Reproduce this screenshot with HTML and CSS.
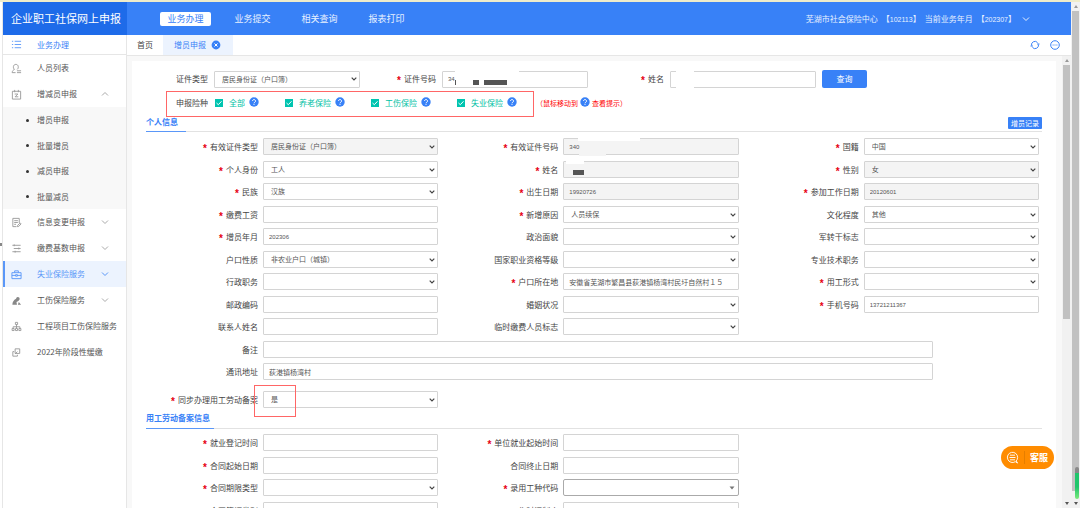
FILE: index.html
```html
<!DOCTYPE html>
<html lang="zh-CN">
<head>
<meta charset="utf-8">
<title>企业职工社保网上申报</title>
<link rel="stylesheet" href="styles.css">
</head>
<body>
<svg class="defs" aria-hidden="true">
  <symbol id="chev" viewBox="0 0 8 8"><path d="M1 2.5 4 5.5 7 2.5"/></symbol>
  <symbol id="help" viewBox="0 0 10 10"><circle cx="5" cy="5" r="4.7" fill="#3881f7" stroke="none"/><path d="M3.5 4a1.5 1.5 0 1 1 2.3 1.3C5.2 5.6 5 5.8 5 6.3M5 7.1v.9" stroke="#fff"/></symbol>
</svg>
<div class="frame">
  <div class="app">
    <header class="header">
      <h1 class="brand">企业职工社保网上申报</h1>
      <nav class="nav">
        <a href="#" class="nav-link current">业务办理</a>
        <a href="#" class="nav-link">业务提交</a>
        <a href="#" class="nav-link">相关查询</a>
        <a href="#" class="nav-link">报表打印</a>
      </nav>
      <div class="account">
        <span>芜湖市社会保险中心</span>
        <span>【<small>102113</small>】</span>
        <span>当前业务年月</span>
        <span>【<small>202307</small>】</span>
        <svg class="icon-s"><use href="#chev"/></svg>
      </div>
    </header>
    <div class="body">
      <aside class="sidebar">
        <a href="#" class="side-item side-title">
          <svg class="icon" viewBox="0 0 12 12"><path d="M4 2.500h7M4 6h7M4 9.500h7M1 2.500h1.400M1 6h1.400M1 9.500h1.400"/></svg><span>业务办理</span></a>
        <a href="#" class="side-item">
          <svg class="icon" viewBox="0 0 12 12"><path d="M3.800 7C1.800 5.500 2.300 1.500 5.300 1.500S8.700 5.500 6.800 7M3.800 7C2.500 7.500 1.500 8.500 1.200 10.500H5M6.500 8.500h4.500M6.500 10.500h4.500"/></svg><span>人员列表</span></a>
        <a href="#" class="side-item">
          <svg class="icon" viewBox="0 0 12 12"><path d="M1.500 2.500h9v8.500h-9zM4 1v2.500M8 1v2.500M4 5.500h3.500L4.500 8.500h3.500"/></svg><span>增减员申报</span><svg class="icon-s up"><use href="#chev"/></svg></a>
        <ul class="sub">
          <li><a href="#">增员申报</a></li>
          <li><a href="#">批量增员</a></li>
          <li><a href="#">减员申报</a></li>
          <li><a href="#">批量减员</a></li>
        </ul>
        <a href="#" class="side-item">
          <svg class="icon" viewBox="0 0 12 12"><path d="M6 10.500H2v-9h7v5M3.500 4h4M3.500 6h4M3.500 8h2M7 10.500l.3-1.500L10 6.500l1 1-2.500 2.700z"/></svg><span>信息变更申报</span><svg class="icon-s"><use href="#chev"/></svg></a>
        <a href="#" class="side-item">
          <svg class="icon" viewBox="0 0 12 12"><path d="M1.500 2.500h9M3 6h7.500M1.500 9.500h9M3.500 1.500v2M8.500 5v2M4.500 8.500v2"/></svg><span>缴费基数申报</span><svg class="icon-s"><use href="#chev"/></svg></a>
        <a href="#" class="side-item active">
          <svg class="icon" viewBox="0 0 12 12"><path d="M1 4h10v6.500H1zM4 4V2h4v2M1 7h4M7 7h4M5 6.200h2v1.600H5z"/></svg><span>失业保险服务</span><svg class="icon-s"><use href="#chev"/></svg></a>
        <a href="#" class="side-item">
          <svg class="icon" viewBox="0 0 12 12"><path d="M5.500 4a2 2 0 1 1 4 .5L8 6.500 6 7.500l.5 3h-5c0-3 1.500-5 4-6.500zM8.500 7.500l2.500 3H7.500z" fill="#888" stroke="none"/></svg><span>工伤保险服务</span><svg class="icon-s"><use href="#chev"/></svg></a>
        <a href="#" class="side-item">
          <svg class="icon" viewBox="0 0 12 12"><path d="M4.800 1.500h2.400v2.300H4.800zM6 3.800v4.400M2.300 8.200V6.300h7.400v1.900M1.200 8.200h2.200v2.200H1.200zM4.900 8.200h2.200v2.200H4.900zM8.600 8.200h2.200v2.200H8.600z"/></svg><span>工程项目工伤保险服务</span></a>
        <a href="#" class="side-item">
          <svg class="icon" viewBox="0 0 12 12"><path d="M4.500 2h5v5h-5zM7 8.500V10H2V5h1.500M4.500 7.500 7 5"/></svg><span>2022年阶段性缓缴</span></a>
      </aside>
      <main class="main">
        <div class="tabs">
          <a href="#" class="tab">首页</a>
          <a href="#" class="tab tab-on">增员申报
            <svg class="help" viewBox="0 0 10 10"><circle cx="5" cy="5" r="4.400" fill="#3881f7" stroke="none"/><path d="M3.500 3.500l3 3M6.500 3.500l-3 3" stroke="#fff"/></svg></a>
          <div class="tab-tools">
            <button type="button" aria-label="刷新"><svg class="help" viewBox="0 0 10 10"><path d="M1.500 5.500A3.500 3.500 0 0 1 7.500 2.500M8.500 4.500A3.500 3.500 0 0 1 2.500 7.500M7 4h2.500M.5 6H3"/></svg></button>
            <button type="button" aria-label="更多"><svg class="help" viewBox="0 0 10 10"><circle cx="5" cy="5" r="4.300"/><path d="M2.600 5h1M4.500 5h1M6.400 5h1"/></svg></button>
          </div>
        </div>
        <div class="work">
          <form class="panel">
            <div class="search">
              <label for="q1">证件类型</label>
              <div class="ctl"><select id="q1"><option>居民身份证（户口簿）</option></select></div>
              <label for="q2" class="req">证件号码</label>
              <div class="ctl"><input id="q2" class="num" value="34"><i class="patch q2a"></i><i class="patch dark q2b"></i><i class="patch dark q2c"></i><i class="patch dark q2d"></i></div>
              <label for="q3" class="req">姓名</label>
              <div class="ctl"><input id="q3"><i class="patch q3a"></i></div>
              <button type="button" class="btn">查询</button>
            </div>
            <div class="kinds">
              <span class="kinds-label">申报险种</span>
              <label class="kind kind-all"><input type="checkbox" checked>全部<svg class="help"><use href="#help"/></svg></label>
              <label class="kind"><input type="checkbox" checked>养老保险<svg class="help"><use href="#help"/></svg></label>
              <label class="kind"><input type="checkbox" checked>工伤保险<svg class="help"><use href="#help"/></svg></label>
              <label class="kind"><input type="checkbox" checked>失业保险<svg class="help"><use href="#help"/></svg></label>
              <span class="hint">（鼠标移动到<svg class="help"><use href="#help"/></svg>查看提示）</span>
              <i class="mark mark-kinds"></i>
            </div>
            <div class="section">
              <h2>个人信息</h2>
              <button type="button" class="btn btn-mini">增员记录</button>
            </div>
            <div class="grid">
              <div class="field"><label for="a1" class="req">有效证件类型</label><div class="ctl"><select id="a1" class="off"><option>居民身份证（户口簿）</option></select></div></div>
              <div class="field"><label for="a2" class="req">有效证件号码</label><div class="ctl"><input id="a2" class="num off" value="340" readonly><i class="patch a2a"></i><i class="patch a2b"></i></div></div>
              <div class="field"><label for="a3" class="req">国籍</label><div class="ctl"><select id="a3"><option>中国</option></select></div></div>

              <div class="field"><label for="b1" class="req">个人身份</label><div class="ctl"><select id="b1"><option>工人</option></select></div></div>
              <div class="field"><label for="b2" class="req">姓名</label><div class="ctl"><input id="b2" class="off" readonly><i class="patch b2a"></i><i class="patch dark b2b"></i></div></div>
              <div class="field"><label for="b3" class="req">性别</label><div class="ctl"><select id="b3" class="off"><option>女</option></select></div></div>

              <div class="field"><label for="c1" class="req">民族</label><div class="ctl"><select id="c1"><option>汉族</option></select></div></div>
              <div class="field"><label for="c2" class="req">出生日期</label><div class="ctl"><input id="c2" class="num off" value="19920726" readonly></div></div>
              <div class="field"><label for="c3" class="req">参加工作日期</label><div class="ctl"><input id="c3" class="num off" value="20120601" readonly></div></div>

              <div class="field"><label for="d1" class="req">缴费工资</label><div class="ctl"><input id="d1"></div></div>
              <div class="field"><label for="d2" class="req">新增原因</label><div class="ctl"><select id="d2"><option>人员续保</option></select></div></div>
              <div class="field"><label for="d3">文化程度</label><div class="ctl"><select id="d3"><option>其他</option></select></div></div>

              <div class="field"><label for="e1" class="req">增员年月</label><div class="ctl"><input id="e1" class="num" value="202306"></div></div>
              <div class="field"><label for="e2">政治面貌</label><div class="ctl"><select id="e2"><option></option></select></div></div>
              <div class="field"><label for="e3">军转干标志</label><div class="ctl"><select id="e3"><option></option></select></div></div>

              <div class="field"><label for="f1">户口性质</label><div class="ctl"><select id="f1"><option>非农业户口（城镇）</option></select></div></div>
              <div class="field"><label for="f2">国家职业资格等级</label><div class="ctl"><select id="f2"><option></option></select></div></div>
              <div class="field"><label for="f3">专业技术职务</label><div class="ctl"><select id="f3"><option></option></select></div></div>

              <div class="field"><label for="g1">行政职务</label><div class="ctl"><select id="g1"><option></option></select></div></div>
              <div class="field"><label for="g2" class="req">户口所在地</label><div class="ctl"><input id="g2" value="安徽省芜湖市繁昌县荻港镇杨湾村民圩自然村１５"></div></div>
              <div class="field"><label for="g3" class="req">用工形式</label><div class="ctl"><select id="g3"><option></option></select></div></div>

              <div class="field"><label for="h1">邮政编码</label><div class="ctl"><input id="h1"></div></div>
              <div class="field"><label for="h2">婚姻状况</label><div class="ctl"><select id="h2"><option></option></select></div></div>
              <div class="field"><label for="h3" class="req">手机号码</label><div class="ctl"><input id="h3" class="num" value="13721211367"></div></div>

              <div class="field first"><label for="i1">联系人姓名</label><div class="ctl"><input id="i1"></div></div>
              <div class="field"><label for="i2">临时缴费人员标志</label><div class="ctl"><select id="i2"><option></option></select></div></div>

              <div class="field wide"><label for="j1">备注</label><div class="ctl"><input id="j1"></div></div>
              <div class="field wide"><label for="k1">通讯地址</label><div class="ctl"><input id="k1" value="荻港镇杨湾村"></div></div>
            </div>
            <div class="grid sync">
              <div class="field"><label for="l1" class="req">同步办理用工劳动备案</label><div class="ctl"><select id="l1"><option>是</option></select><i class="mark mark-sync"></i></div></div>
            </div>
            <div class="section section-labor">
              <h2>用工劳动备案信息</h2>
            </div>
            <div class="grid">
              <div class="field"><label for="m1" class="req">就业登记时间</label><div class="ctl"><input id="m1"></div></div>
              <div class="field"><label for="m2" class="req">单位就业起始时间</label><div class="ctl"><input id="m2"></div></div>
              <div class="field first"><label for="n1" class="req">合同起始日期</label><div class="ctl"><input id="n1"></div></div>
              <div class="field"><label for="n2">合同终止日期</label><div class="ctl"><input id="n2"></div></div>
              <div class="field first"><label for="o1" class="req">合同期限类型</label><div class="ctl"><select id="o1"><option></option></select></div></div>
              <div class="field"><label for="o2" class="req">录用工种代码</label><div class="ctl"><select id="o2" class="combo"><option></option></select></div></div>
              <div class="field first"><label for="p1">合同签订类别</label><div class="ctl"><input id="p1"></div></div>
              <div class="field"><label for="p2">工作时间制度</label><div class="ctl"><input id="p2"></div></div>
            </div>
          </form>
          <div class="bar" aria-hidden="true"><span class="arrow"></span><span class="thumb thumb-in"></span><span class="arrow down"></span></div>
        </div>
      </main>
    </div>
  </div>
  <div class="bar" aria-hidden="true"><span class="arrow"></span><span class="thumb"></span><span class="arrow down"></span><i class="meter"></i></div>
</div>
<button type="button" class="service">
  <svg viewBox="0 0 14 14"><path d="M10 11.500A5.500 5.500 0 1 1 12.500 7c0 1.700-.8 3-1.500 3.700l1.500 2.300zM4.300 4.500h5.400M3.800 7h6.400M4.300 9.500h5.400"/></svg>
  <span>客服</span>
</button>
<i class="handle"></i>
</body>
</html>
```
FILE: styles.css
```css
* { box-sizing: border-box; }
body {
  margin: 0;
  background: #fff;
  color: #444;
  font: 8px/12px "Noto Sans CJK SC", sans-serif;
  overflow: hidden;
}
a { color: inherit; text-decoration: none; }
button, input, select { font: inherit; color: inherit; margin: 0; }
button { border: 0; padding: 0; background: none; cursor: pointer; }
svg { fill: none; stroke: currentColor; flex: none; }
.defs { position: absolute; width: 0; height: 0; }
.icon { width: 11px; height: 11px; stroke-width: 1; }
.icon-s { width: 8px; height: 8px; }
.help { width: 10px; height: 10px; }
.up { transform: rotate(180deg); }

.frame {
  display: flex;
  height: 100vh;
  border-top: 2px solid #efeccb;
  padding-left: 2px;
}
.app {
  flex: 1;
  min-width: 0;
  display: flex;
  flex-direction: column;
  border-left: 1px solid #e6e6e6;
}

.header {
  flex: none;
  display: flex;
  align-items: center;
  height: 33px;
  background: #3881f7;
  color: #e8f1ff;
}
.brand {
  margin: 0;
  width: 124px;
  padding-left: 8px;
  background: #1e6be9;
  color: #fff;
  font-size: 11px;
  font-weight: 400;
  line-height: 33px;
  white-space: nowrap;
}
.nav { display: flex; gap: 16px; padding-left: 33px; font-size: 9px; }
.nav-link { width: 51px; line-height: 14px; border-radius: 2px; text-align: center; }
.nav-link.current { background: #fff; color: #3881f7; }
.account { margin-left: auto; margin-right: 41px; display: flex; align-items: center; gap: 4px; }
.account small { font: 7px "Liberation Sans", sans-serif; }
.account svg { margin-left: 2px; }

.body { flex: 1; min-height: 0; display: flex; }
.sidebar { flex: none; width: 124px; border-right: 1px solid #e6e6e6; color: #555; }
.side-item {
  display: flex;
  align-items: center;
  gap: 15px;
  height: 26px;
  padding-left: 8px;
  white-space: nowrap;
  position: relative;
}
.side-item .icon { color: #999; }
.side-item .icon-s { position: absolute; left: 98px; color: #aaa; }
.side-title { height: 20px; border-bottom: 1px solid #e6e6e6; color: #3881f7; }
.side-title .icon, .side-item.active .icon, .side-item.active .icon-s { color: #5a97f8; }
.side-item.active { background: #ecf3fe; color: #5a97f8; border-left: 2px solid #5a97f8; padding-left: 6px; }
.side-item.active .icon-s { left: 96px; }
.sub {
  list-style: none;
  margin: 0;
  padding: 0;
  display: grid;
  grid-auto-rows: 26px 25px;
  align-items: center;
  background: #f8f8f8;
}
.sub a { display: flex; align-items: center; gap: 8px; padding-left: 23px; }
.sub a::before { content: ""; width: 3px; height: 3px; border-radius: 50%; background: #333; }

.main { flex: 1; min-width: 0; display: flex; flex-direction: column; }
.tabs { flex: none; display: flex; height: 21px; border-bottom: 1px solid #e6e6e6; line-height: 20px; }
.tab { padding: 0 10px; }
.tab-on { display: flex; align-items: center; gap: 5px; padding: 0 12px 0 11px; background: #ecf3fe; color: #3881f7; }
.tab-tools { margin-left: auto; margin-right: 11px; display: flex; align-items: center; gap: 10px; color: #3881f7; }
.tab-tools button { height: 10px; line-height: 0; }

.work { flex: 1; min-height: 0; display: flex; background: #f8f8f8; }
.panel { flex: 1; min-width: 0; margin: 5px 6px 0 5px; background: #fff; overflow: hidden; }

.ctl { position: relative; display: flex; min-width: 0; }
.ctl input, .ctl select {
  width: 100%;
  height: 17px;
  border: 1px solid #d4d4d4;
  border-radius: 1px;
  padding: 0 5px;
  background: #fff;
  color: #555;
  font-size: 7px;
  line-height: 15px;
  outline: 0;
}
.ctl select {
  appearance: none;
  padding: 0 12px 0 7px;
  background: #fff url("data:image/svg+xml,%3Csvg xmlns='http://www.w3.org/2000/svg' viewBox='0 0 6 6'%3E%3Cpath d='M.7 1.700 3 4 5.300 1.700' fill='none' stroke='%23444' stroke-width='1.200'/%3E%3C/svg%3E") no-repeat right 2px center / 6px 6px;
}
.ctl select.combo {
  border-color: #aaa;
  border-radius: 2px;
  background-image: url("data:image/svg+xml,%3Csvg xmlns='http://www.w3.org/2000/svg' viewBox='0 0 6 6'%3E%3Cpath d='M.5 1.500h5L3 4.500z' fill='%23777'/%3E%3C/svg%3E");
  background-position: right 3px center;
}
.ctl .off { background-color: #f4f4f4; }
.ctl .num { font-family: "Liberation Sans", sans-serif; font-size: 6px; }
.req::before { content: "*"; margin-right: 3px; color: #e60012; font: bold 10px/8px "Liberation Sans", sans-serif; vertical-align: -2px; }

.search {
  display: grid;
  grid-template-columns: 76px 146px 70px 146px 70px 146px 45px;
  column-gap: 6px;
  align-items: center;
  padding-top: 9px;
}
.search label { text-align: right; }
.btn { height: 18px; border-radius: 2px; background: #3881f7; color: #fff; }

.kinds { position: relative; display: flex; align-items: center; height: 26px; padding: 4px 0 0 44px; }
.kinds-label { width: 39px; }
.kind { display: flex; align-items: center; width: 86px; color: #00bfa5; }
.kind-all { width: 70px; }
.kind input {
  appearance: none;
  width: 8px;
  height: 8px;
  margin-right: 6px;
  background: #00c4b0 url("data:image/svg+xml,%3Csvg xmlns='http://www.w3.org/2000/svg' viewBox='0 0 8 8'%3E%3Cpath d='M1.500 4 3.300 5.700 6.500 2.300' fill='none' stroke='white'/%3E%3C/svg%3E");
}
.kind .help { margin: 0 0 2px 4px; }
.hint { display: flex; align-items: center; gap: 2px; margin-left: -7px; color: #f00; font-size: 7px; white-space: nowrap; }
.hint .help { margin-bottom: 2px; }

.section {
  display: flex;
  align-items: flex-start;
  justify-content: space-between;
  height: 17px;
  margin: 1px 14px 6px;
  border-bottom: 1px solid #e2e2e2;
}
.section h2 { height: 17px; min-width: 40px; margin: 0; border-bottom: 1px solid #5a97f8; color: #3881f7; font-size: 8px; font-weight: 700; line-height: 14px; }
.section-labor { margin-top: 0; margin-bottom: 5px; }
.section-labor h2 { min-width: 68px; line-height: 12px; }
.btn-mini { height: 12px; width: 34px; margin-top: 2px; border-radius: 1px; font-size: 7px; line-height: 12px; }

.grid {
  display: grid;
  grid-template-columns: repeat(3, minmax(0, 1fr));
  grid-auto-rows: 23px 22px;
  align-items: start;
  padding: 0 17px 0 6px;
}
.field { display: grid; grid-template-columns: 120px minmax(0, 1fr); column-gap: 5px; align-items: center; }
.field label { text-align: right; white-space: nowrap; }
.first { grid-column: 1; }
.wide { grid-column: 1 / -1; padding-right: 106px; }
.sync { padding-top: 5px; grid-auto-rows: 21px; }

.patch { position: absolute; background: #fff; }
.patch.dark { background: #555; }
.q2a { left: 13px; top: 0; width: 64px; height: 9px; }
.q2b { left: 13px; top: 9px; width: 1px; height: 5px; }
.q2c { left: 31px; top: 9px; width: 6px; height: 5px; }
.q2d { left: 42px; top: 9px; width: 23px; height: 5px; }
.q3a { left: 6px; top: 0; width: 18px; height: 17px; }
.a2a { left: 15px; top: -1px; width: 62px; height: 4px; }
.patch.a2b { left: 16px; top: 14px; width: 27px; height: 4px; background: #f4f4f4; }
.b2a { left: 3px; top: -1px; width: 18px; height: 4px; }
.b2b { left: 10px; top: 9px; width: 11px; height: 5px; }

.mark { position: absolute; border: 1px solid #f66; pointer-events: none; }
.mark-kinds { left: 34px; top: 3px; width: 368px; height: 26px; }
.mark-sync { left: -9px; top: -6px; width: 42px; height: 32px; }

.bar { position: relative; flex: none; width: 9px; display: flex; flex-direction: column; align-items: center; gap: 3px; padding: 3px 0; background: #f1f1f1; }
.arrow { border: 2px solid transparent; border-top: 0; border-bottom: 3px solid #999; }
.arrow.down { margin-top: auto; border-top: 3px solid #555; border-bottom: 0; }
.thumb { width: 7px; height: 96%; background: #c1c1c1; }
.thumb-in { height: 57%; }
.meter { position: absolute; right: 1px; bottom: 9px; width: 4px; height: 32px; border-radius: 2px; background: linear-gradient(#888 0 6px, #1fc66b 6px 20px, #7be87b); }

.service {
  position: fixed;
  right: 26px;
  bottom: 39px;
  display: flex;
  align-items: center;
  height: 23px;
  width: 53px;
  border-radius: 12px;
  background: #ff8c00;
  color: #fff;
  font-size: 9px;
  font-weight: 700;
}
.service svg { width: 24px; height: 13px; stroke-width: 1; border-right: 1px solid #e67e00; }
.service span { padding-left: 5px; }
.handle { position: fixed; left: 0; top: 243px; width: 2px; height: 3px; background: #888; }
```
